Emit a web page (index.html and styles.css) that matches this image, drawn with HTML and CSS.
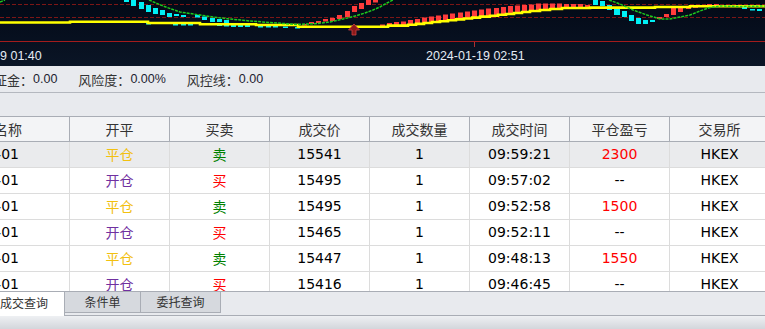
FILE: index.html
```html
<!DOCTYPE html>
<html lang="zh-CN">
<head>
<meta charset="utf-8">
<title>成交查询</title>
<link rel="stylesheet" href="styles.css">
</head>
<body>
<div class="chart">
<svg width="765" height="66" viewBox="0 0 765 66" xmlns="http://www.w3.org/2000/svg">
  <defs>
    <linearGradient id="bg" x1="0" y1="0" x2="0" y2="1">
      <stop offset="0" stop-color="#030916"/>
      <stop offset="1" stop-color="#0a1526"/>
    </linearGradient>
  </defs>
  <rect width="765" height="66" fill="url(#bg)"/>
  <line x1="0" y1="4.5" x2="765" y2="4.5" stroke="#7d1616" stroke-dasharray="4 2"/>
  <line x1="0" y1="17.5" x2="765" y2="17.5" stroke="#7d1616" stroke-dasharray="4 2"/>
  <line x1="0" y1="41.5" x2="765" y2="41.5" stroke="#a31c1c"/>
  <line x1="474.5" y1="42" x2="474.5" y2="47" stroke="#b03030"/>
  <g fill="#00f0f5">
    <rect x="124" y="0" width="5" height="2"/>
    <rect x="131" y="0" width="5" height="6"/>
    <rect x="139" y="2" width="5" height="7"/>
    <rect x="146" y="5" width="5" height="7"/>
    <rect x="153" y="8" width="5" height="6"/>
    <rect x="160" y="10" width="5" height="5"/>
    <rect x="167" y="13" width="5" height="4"/>
    <rect x="174" y="14" width="5" height="2"/>
    <rect x="181" y="15" width="5" height="2"/>
    <rect x="195" y="15" width="5" height="2.5"/>
    <rect x="202" y="16.5" width="5" height="3.5"/>
    <rect x="210" y="18" width="5" height="4"/>
    <rect x="217" y="19" width="5" height="3"/>
    <rect x="224" y="20" width="5" height="3"/>
    <rect x="146" y="23" width="5" height="1.5"/>
    <rect x="173" y="24" width="5" height="1.5"/>
    <rect x="181" y="24" width="5" height="1.5"/>
    <rect x="188" y="24" width="5" height="1.5"/>
    <rect x="217" y="24.5" width="5" height="1.5"/>
    <rect x="224" y="24.5" width="5" height="2"/>
    <rect x="231" y="25" width="5" height="2"/>
    <rect x="238" y="25" width="5" height="2"/>
    <rect x="245" y="25" width="5" height="2"/>
    <rect x="258" y="26" width="5" height="1.5"/>
    <rect x="266" y="26" width="5" height="1.5"/>
    <rect x="273" y="26" width="5" height="1.5"/>
    <rect x="283" y="26.5" width="5" height="1.5"/>
    <rect x="295" y="27" width="5" height="1.5"/>
    <rect x="593" y="0" width="5" height="5"/>
    <rect x="600" y="1" width="5" height="5"/>
    <rect x="607" y="5" width="5" height="5"/>
    <rect x="614" y="7" width="6" height="8"/>
    <rect x="622" y="11" width="5" height="6"/>
    <rect x="629" y="15" width="5" height="6"/>
    <rect x="636" y="18" width="5" height="6"/>
    <rect x="643" y="20" width="5" height="4"/>
    <rect x="650" y="20" width="5" height="2"/>
    <rect x="742" y="7" width="5" height="2"/>
    <rect x="750" y="9" width="5" height="1.5"/>
    <rect x="757" y="9" width="5" height="2"/>
  </g>
  <g fill="#ff3c3c">
    <rect x="302" y="24" width="5" height="1.5"/>
    <rect x="309" y="22" width="5" height="2"/>
    <rect x="316" y="21" width="5" height="2"/>
    <rect x="323" y="19" width="5" height="2.5"/>
    <rect x="330" y="18" width="5" height="3"/>
    <rect x="337" y="15" width="5" height="4"/>
    <rect x="345" y="11" width="5" height="6"/>
    <rect x="352" y="6" width="5" height="6"/>
    <rect x="359" y="3" width="5" height="6"/>
    <rect x="366" y="0" width="5" height="5"/>
    <rect x="373" y="0" width="5" height="2.5"/>
    <rect x="380" y="24.5" width="5" height="2.3"/>
    <rect x="387" y="23" width="5" height="3"/>
    <rect x="394" y="22" width="5" height="3.6"/>
    <rect x="401" y="21.5" width="5" height="4.1"/>
    <rect x="408" y="20" width="5" height="4.8"/>
    <rect x="415" y="19" width="5" height="5"/>
    <rect x="422" y="17.5" width="5" height="5.5"/>
    <rect x="429" y="16.5" width="5" height="6"/>
    <rect x="436" y="15.5" width="5" height="6.5"/>
    <rect x="443" y="14.5" width="5" height="6.7"/>
    <rect x="450" y="13.5" width="5" height="6.8"/>
    <rect x="458" y="12.5" width="5" height="6.9"/>
    <rect x="465" y="11.5" width="5" height="7"/>
    <rect x="472" y="10.5" width="5" height="7.1"/>
    <rect x="479" y="9.5" width="5" height="7.5"/>
    <rect x="486" y="8.5" width="5" height="8.1"/>
    <rect x="494" y="8" width="5" height="7.8"/>
    <rect x="501" y="7" width="5" height="7.8"/>
    <rect x="508" y="6" width="5" height="8"/>
    <rect x="515" y="5.5" width="5" height="7.5"/>
    <rect x="522" y="5" width="5" height="7"/>
    <rect x="529" y="4.5" width="5" height="6.5"/>
    <rect x="536" y="3.5" width="5" height="7"/>
    <rect x="543" y="3.5" width="5" height="6.5"/>
    <rect x="550" y="3.5" width="5" height="5.5"/>
    <rect x="557" y="3.5" width="5" height="5"/>
    <rect x="564" y="4" width="5" height="4"/>
    <rect x="571" y="4" width="5" height="4"/>
    <rect x="578" y="4" width="5" height="4"/>
    <rect x="585" y="5" width="5" height="3"/>
    <rect x="657" y="17" width="5" height="2"/>
    <rect x="664" y="14" width="5" height="3"/>
    <rect x="671" y="6" width="5" height="9"/>
    <rect x="678" y="6" width="5" height="6"/>
    <rect x="686" y="6" width="5" height="3"/>
    <rect x="693" y="5" width="5" height="3"/>
    <rect x="700" y="5" width="5" height="2"/>
    <rect x="707" y="4" width="5" height="3"/>
    <rect x="714" y="4" width="5" height="3"/>
  </g>
  <path d="M0 22.5 H70 V21.7 H148 V23 H200 V24.3 H256 V25 H298 V26.8 H388 V25.6 H408 V24.8 H416 V23.9 H424 V23 H432 V22 H440 V21.2 H448 V20.3 H456 V19.4 H464 V18.5 H472 V17.6 H480 V16.6 H490 V15.8 H498 V14.8 H506 V14 H514 V13 H522 V12 H530 V11 H540 V10 H550 V9 H562 V8 H590 V7.6 H655 V7 H690 V6.3 H765" fill="none" stroke="#ffff00" stroke-width="2.6"/>
  <g fill="none" stroke="#1ec81e" stroke-width="1.5" stroke-dasharray="3 1">
    <polyline points="0,2 5,0"/>
    <polyline points="149,0 163,6 180,12 200,15 213,17 230,19 250,21 270,22.5 297,24.5 317,23.5 330,22 343,19 357,15.5 365,13 373,10 380,7 387,3 393,0"/>
    <polyline points="609,0 620,4 633,10 647,15 660,19 670,19 680,17 690,15 700,11 710,7.5 720,6 740,6.5 765,6"/>
  </g>
  <polygon points="354,24 348.5,30 352,30 352,35 356,35 356,30 359.5,30" fill="#8b1a1a" stroke="#d04040" stroke-width="0.8"/>
  <text class="axis-label" x="0" y="60">9 01:40</text>
  <text class="axis-label" x="426" y="60">2024-01-19 02:51</text>
</svg>
</div>

<div class="info">
  <div class="info-item">证金：<span class="num">0.00</span></div>
  <div class="info-item">风险度：<span class="num">0.00%</span></div>
  <div class="info-item">风控线：<span class="num">0.00</span></div>
</div>

<div class="toolbar"></div>

<div class="table-wrap">
  <div class="grid">
    <div class="row head">
      <div class="th name">名称</div>
      <div class="th">开平</div>
      <div class="th">买卖</div>
      <div class="th">成交价</div>
      <div class="th">成交数量</div>
      <div class="th">成交时间</div>
      <div class="th">平仓盈亏</div>
      <div class="th">交易所</div>
    </div>
    <div class="row sel">
      <div class="td name">HSI2401</div>
      <div class="td close">平仓</div>
      <div class="td sell">卖</div>
      <div class="td">15541</div>
      <div class="td">1</div>
      <div class="td">09:59:21</div>
      <div class="td profit">2300</div>
      <div class="td">HKEX</div>
    </div>
    <div class="row">
      <div class="td name">HSI2401</div>
      <div class="td open">开仓</div>
      <div class="td buy">买</div>
      <div class="td">15495</div>
      <div class="td">1</div>
      <div class="td">09:57:02</div>
      <div class="td">--</div>
      <div class="td">HKEX</div>
    </div>
    <div class="row">
      <div class="td name">HSI2401</div>
      <div class="td close">平仓</div>
      <div class="td sell">卖</div>
      <div class="td">15495</div>
      <div class="td">1</div>
      <div class="td">09:52:58</div>
      <div class="td profit">1500</div>
      <div class="td">HKEX</div>
    </div>
    <div class="row">
      <div class="td name">HSI2401</div>
      <div class="td open">开仓</div>
      <div class="td buy">买</div>
      <div class="td">15465</div>
      <div class="td">1</div>
      <div class="td">09:52:11</div>
      <div class="td">--</div>
      <div class="td">HKEX</div>
    </div>
    <div class="row">
      <div class="td name">HSI2401</div>
      <div class="td close">平仓</div>
      <div class="td sell">卖</div>
      <div class="td">15447</div>
      <div class="td">1</div>
      <div class="td">09:48:13</div>
      <div class="td profit">1550</div>
      <div class="td">HKEX</div>
    </div>
    <div class="row">
      <div class="td name">HSI2401</div>
      <div class="td open">开仓</div>
      <div class="td buy">买</div>
      <div class="td">15416</div>
      <div class="td">1</div>
      <div class="td">09:46:45</div>
      <div class="td">--</div>
      <div class="td">HKEX</div>
    </div>
  </div>
</div>

<div class="tabs">
  <div class="tab active">成交查询</div>
  <div class="tab cond">条件单</div>
  <div class="tab order">委托查询</div>
</div>
<div class="footer"></div>
</body>
</html>
```

FILE: styles.css
```css
html, body {
  margin: 0;
  padding: 0;
}

body {
  width: 765px;
  height: 329px;
  overflow: hidden;
  background: #e8eaee;
  font-family: "Noto Sans CJK SC", sans-serif;
  color: #333;
}

.chart svg {
  display: block;
}

.axis-label {
  font-family: "Liberation Sans", sans-serif;
  font-size: 12.5px;
  fill: #e4ebf3;
}

.info {
  height: 26px;
  box-sizing: content-box;
  border-bottom: 1px solid #b4b8bf;
  display: flex;
  align-items: center;
  gap: 21px;
  margin-left: -6px;
  font-size: 13px;
  color: #333;
}

.info-item {
  display: flex;
  align-items: center;
  white-space: nowrap;
}

.info .num {
  font-family: "Liberation Sans", sans-serif;
  font-size: 12.5px;
  color: #1c2230;
}

.toolbar {
  height: 23px;
}

.table-wrap {
  height: 175px;
  box-sizing: border-box;
  overflow: hidden;
  border-top: 1px solid #a9adb5;
  background: #fff;
}

.grid {
  display: grid;
  grid-template-columns: repeat(8, 100px);
  width: 800px;
  margin-left: -30px;
}

.row {
  display: contents;
}

.th {
  height: 25px;
  box-sizing: border-box;
  line-height: 24px;
  background: #f3f4f6;
  border-right: 1px solid #a9adb5;
  border-bottom: 1px solid #a9adb5;
  text-align: center;
  font-size: 14px;
  color: #333;
  white-space: nowrap;
}

.td {
  height: 26px;
  box-sizing: border-box;
  line-height: 25px;
  background: #fff;
  border-right: 1px solid #dcdcdc;
  border-bottom: 1px solid #dcdcdc;
  text-align: center;
  font-family: "DejaVu Sans", "Noto Sans CJK SC", sans-serif;
  font-size: 14px;
  color: #000;
  white-space: nowrap;
  overflow: hidden;
}

.row.sel .td {
  background: #eaebed;
}

.th.name {
  text-align: right;
  padding-right: 47px;
}

.td.name {
  display: flex;
  justify-content: flex-end;
  padding-right: 50px;
}

.td.close {
  color: #f2c010;
  font-family: "Noto Sans CJK SC", sans-serif;
}

.td.open {
  color: #7030a0;
  font-family: "Noto Sans CJK SC", sans-serif;
}

.td.sell {
  color: #008000;
  font-family: "Noto Sans CJK SC", sans-serif;
}

.td.buy {
  color: #ff0000;
  font-family: "Noto Sans CJK SC", sans-serif;
}

.td.profit {
  color: #ff0000;
}

.tabs {
  height: 23px;
  box-sizing: content-box;
  border-top: 1px solid #a9adb5;
  border-bottom: 1px solid #a9adb5;
  display: flex;
  align-items: flex-start;
  background: #e8eaee;
}

.tab {
  margin-top: -1px;
  height: 22px;
  box-sizing: border-box;
  background: #d6d9de;
  border: 1px solid #a9adb5;
  border-left: none;
  font-size: 12px;
  line-height: 20px;
  text-align: center;
  color: #333;
  white-space: nowrap;
}

.tab.active {
  margin-left: -16px;
  width: 81px;
  height: 24px;
  background: #fff;
  border-top: none;
  border-bottom: none;
  margin-top: 0;
  line-height: 22px;
}

.tab.cond {
  width: 76px;
}

.tab.order {
  width: 80px;
}

.footer {
  height: 13px;
  background: linear-gradient(#eef0f3, #d3d6db);
}
```
